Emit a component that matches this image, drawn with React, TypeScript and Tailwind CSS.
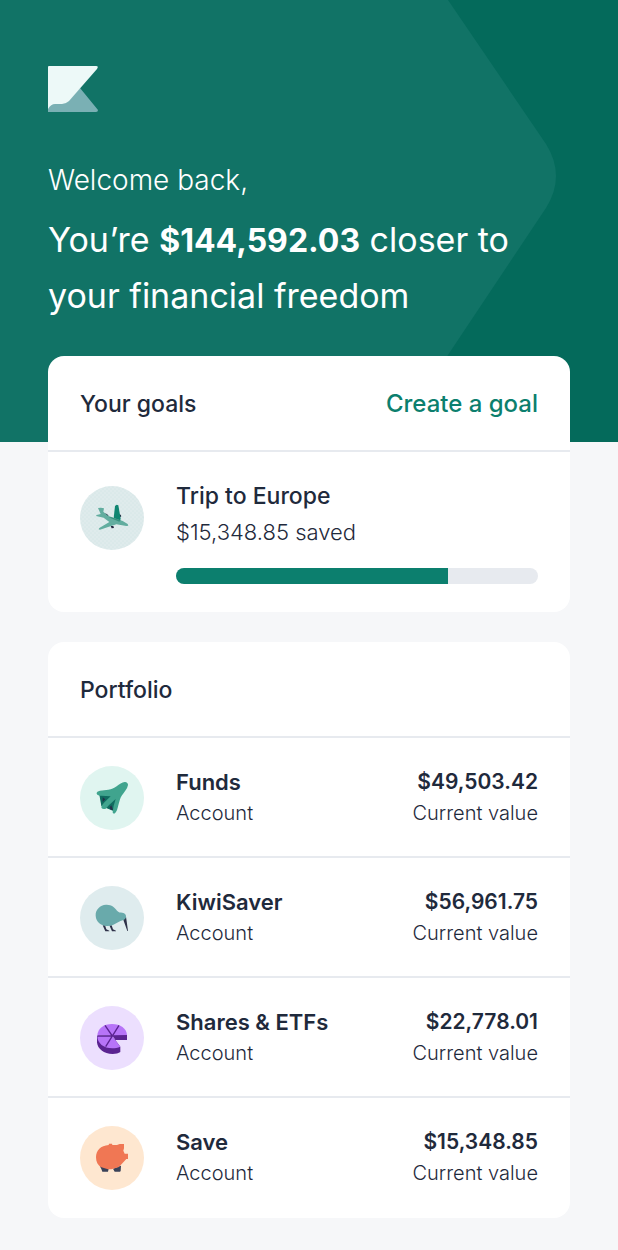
import { ReactNode } from 'react';

interface Account {
  name: string;
  value: string;
  icon: ReactNode;
}

const PlaneIcon = () => (
  <svg viewBox="24 24 192 192" className="size-16" aria-hidden="true">
    <defs>
      <pattern id="plane-dots" width="12" height="12" patternUnits="userSpaceOnUse">
        <circle cx="3" cy="3" r="1.2" fill="#b4d3d5" />
        <circle cx="9" cy="9" r="1.2" fill="#b4d3d5" />
      </pattern>
    </defs>
    <circle cx="120" cy="120" r="96" fill="#dfebec" />
    <circle cx="120" cy="120" r="96" fill="url(#plane-dots)" />
    <path d="M91 104l14 4 5 6-12 0zM138 108l8 2 2 5-7 5zM116 144l8 0 2 6-7 1z" fill="#23263f" />
    <path d="M125 121l4-37 5-4 5 2 7 40-2 6z" fill="#0f8571" />
    <path d="M78 90l8-1 10 2-2 10 14 12 18 7 26 9 15 9 2 5-6 1-30-5-49 16-4-1 2-4 30-18-17-13-23-5 2-3 12-3z" fill="#62ad9f" />
    <path d="M110 118l8 0 28 9-4 4z" fill="#38917f" />
  </svg>
);

const FundsIcon = () => (
  <svg viewBox="24 24 192 192" className="size-16" aria-hidden="true">
    <circle cx="120" cy="120" r="96" fill="#e0f5f0" />
    <path d="M82 110l6 34 38 16 6-4 10-48-30-6z" fill="#0f6b5f" />
    <path d="M92 118l8 6-8 8zM113 148l5-6 5 14-7-1z" fill="#25304a" />
    <path d="M158 72c5-1 11 4 10 9-2 12-12 22-19 32-5 8-7 18-10 29-2 9-5 20-10 24-3 2-7 0-7-4l3-19 6-20-10 9c-5 5-11 10-17 17-2 3-5 5-9 4-4 0-7-3-7-6 1-5 5-9 8-13l20-19-28-2c-7 0-12-2-14-6-1-5 4-8 10-9l25-3c10-1 17-5 25-10 8-6 16-12 24-13z" fill="#40a48e" />
  </svg>
);

const KiwiIcon = () => (
  <svg viewBox="24 24 192 192" className="size-16" aria-hidden="true">
    <circle cx="120" cy="120" r="96" fill="#dfecee" />
    <path d="M92 142l7 0 4 12 9 4v2h-12zM112 142l7 0 4 12 9 4v2h-12zM153 122l9-6 2 14 4 29-2 0-10-28z" fill="#2f3249" />
    <path d="M102 80c16-1 26 8 33 18 5 6 10 5 16 6 8 1 12 6 11 13-1 8-9 9-18 13-12 5-21 14-36 14-21 0-36-12-37-31-1-18 13-32 31-33z" fill="#69aaab" />
  </svg>
);

const SharesIcon = () => (
  <svg viewBox="24 24 192 192" className="size-16" aria-hidden="true">
    <circle cx="120" cy="120" r="96" fill="#ecdffe" />
    <path d="M75 114v19c2 20 20 35 47 35 9 0 18-3 23-6v-16L120 113z" fill="#5b2391" />
    <path d="M120 111h45v15h-35z" fill="#5b2391" />
    <path d="M120 112L76 112C77 92 95 78 120 78s44 14 45 33z" fill="#b774f8" />
    <path d="M120 113L145 146c-8 4-16 5-24 5-26 0-45-15-45-37z" fill="#b774f8" />
    <path d="M76 114h46M99 82l22 32M141 82l-40 64" fill="none" stroke="#5b2391" strokeWidth="4" />
  </svg>
);

const SaveIcon = () => (
  <svg viewBox="24 24 192 192" className="size-16" aria-hidden="true">
    <circle cx="120" cy="120" r="96" fill="#fee7d0" />
    <path d="M83 143l8 0 19 9-2 9h-17l-3-8zM146 143l1 0-1 16-2 2h-16l-5-9z" fill="#3a4258" />
    <path d="M110 81l1-4h9l1 4h14l8-3h13v13l-2 7 4 9h10v16h-5l-16 17-8 8-21 6h-10l-22-7c-8-5-14-15-14-29 0-22 14-35 38-37z" fill="#f07754" />
  </svg>
);

const accounts: Account[] = [
  { name: 'Funds', value: '$49,503.42', icon: <FundsIcon /> },
  { name: 'KiwiSaver', value: '$56,961.75', icon: <KiwiIcon /> },
  { name: 'Shares & ETFs', value: '$22,778.01', icon: <SharesIcon /> },
  { name: 'Save', value: '$15,348.85', icon: <SaveIcon /> },
];

const Logo = () => (
  <svg width="50" height="46" viewBox="0 0 50 46" role="img" aria-label="Home">
    <path d="M32 22l18 22q0 2-2 2H0v-6l6-3h12z" fill="#7ab0b4" />
    <path d="M1 0h47q3 0 1 3L21 35q-3 3-7 3H7q-4 0-7 5V1q0-1 1-1z" fill="#edf9f8" />
  </svg>
);

const AccountRow = ({ name, value, icon }: Account) => (
  <li className="flex items-start gap-8 border-t-2 border-[#e7eaef] px-8 pt-7 pb-[26px]">
    <div className="shrink-0">{icon}</div>
    <div className="flex min-w-0 flex-1 justify-between">
      <div>
        <h3 className="text-[22px] leading-8 font-semibold">{name}</h3>
        <p className="text-xl leading-[30px] font-light">Account</p>
      </div>
      <div className="text-right">
        <p className="text-[21px] leading-8 font-semibold">{value}</p>
        <p className="text-xl leading-[30px] font-light">Current value</p>
      </div>
    </div>
  </li>
);

export default function App() {
  const goalProgress = 75;

  return (
    <div className="min-h-screen bg-[#f6f7f9] pb-8 font-['Inter',sans-serif] text-[#1f2a3c]">
      <header className="relative overflow-hidden bg-[#046a5b] px-12 pt-[66px] pb-[118px] text-white">
        <svg
          width="618"
          height="442"
          viewBox="0 0 618 442"
          className="absolute top-0 left-0"
          aria-hidden="true"
        >
          <path d="M0 0H448L546 144Q566 176 546 208L390 442H0z" fill="#117366" />
        </svg>
        <div className="relative">
          <Logo />
          <p className="mt-12 text-[28px] leading-10 font-light">Welcome back,</p>
          <h1 className="mt-3 text-[34px] leading-14 font-normal">
            You’re <strong className="text-[32px] leading-none font-bold">$144,592.03</strong> closer to
            <br />
            your financial freedom
          </h1>
        </div>
      </header>

      <main className="relative -mt-[86px] space-y-[30px] px-12">
        <section className="rounded-2xl bg-white">
          <div className="flex items-center justify-between px-8 pt-[30px] pb-7">
            <h2 className="text-[23px] leading-9 font-medium">Your goals</h2>
            <button type="button" className="text-2xl leading-9 font-medium text-[#0c7f6e]">
              Create a goal
            </button>
          </div>
          <div className="flex gap-8 border-t-2 border-[#e7eaef] px-8 pt-[26px] pb-7">
            <div className="mt-2 shrink-0">
              <PlaneIcon />
            </div>
            <div className="min-w-0 flex-1">
              <h3 className="text-[23px] leading-9 font-medium">Trip to Europe</h3>
              <p className="text-[22px] leading-9 font-light">$15,348.85 saved</p>
              <div
                role="progressbar"
                aria-label="Trip to Europe"
                aria-valuenow={goalProgress}
                aria-valuemin={0}
                aria-valuemax={100}
                className="mt-[18px] h-4 overflow-hidden rounded-full bg-[#e7eaef]"
              >
                <div className="h-full bg-[#0c7f6e]" style={{ width: `${goalProgress}%` }} />
              </div>
            </div>
          </div>
        </section>

        <section className="rounded-2xl bg-white pb-0.5">
          <h2 className="px-8 pt-[30px] pb-7 text-[23px] leading-9 font-medium">Portfolio</h2>
          <ul>
            {accounts.map((account) => (
              <AccountRow key={account.name} {...account} />
            ))}
          </ul>
        </section>
      </main>
    </div>
  );
}
